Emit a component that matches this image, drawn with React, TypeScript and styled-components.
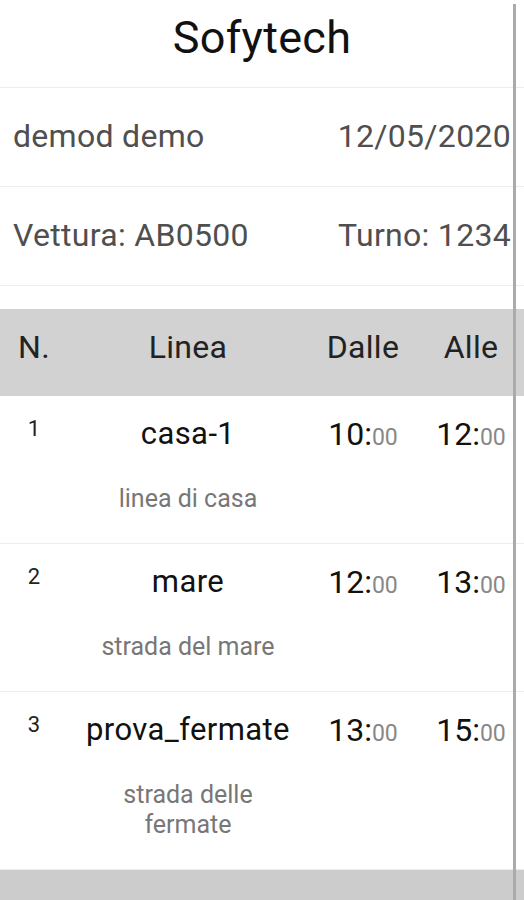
import styled, { createGlobalStyle } from "styled-components";

const GlobalStyle = createGlobalStyle`
  body {
    margin: 0;
    background: #fff;
    font-family: Roboto, "Noto Sans", Arial, sans-serif;
  }
`;

type Corsa = {
  n: number;
  linea: string;
  descrizione: string;
  dalle: [string, string];
  alle: [string, string];
};

const corse: Corsa[] = [
  { n: 1, linea: "casa-1", descrizione: "linea di casa", dalle: ["10", "00"], alle: ["12", "00"] },
  { n: 2, linea: "mare", descrizione: "strada del mare", dalle: ["12", "00"], alle: ["13", "00"] },
  { n: 3, linea: "prova_fermate", descrizione: "strada delle fermate", dalle: ["13", "00"], alle: ["15", "00"] },
];

const Orario = ({ value }: { value: [string, string] }) => (
  <Time>
    {value[0]}:<Minutes>{value[1]}</Minutes>
  </Time>
);

export default function App() {
  return (
    <Screen>
      <GlobalStyle />
      <Title>Sofytech</Title>
      <InfoRow>
        <span>demod demo</span>
        <span>12/05/2020</span>
      </InfoRow>
      <InfoRow>
        <span>Vettura: AB0500</span>
        <span>Turno: 1234</span>
      </InfoRow>

      <Table>
        <HeaderRow>
          <HeadCell>N.</HeadCell>
          <HeadCell>Linea</HeadCell>
          <HeadCell>Dalle</HeadCell>
          <HeadCell>Alle</HeadCell>
        </HeaderRow>
        {corse.map((c) => (
          <Row key={c.n}>
            <Num>{c.n}</Num>
            <LineaCell>
              <LineName>{c.linea}</LineName>
              <LineDesc>{c.descrizione}</LineDesc>
            </LineaCell>
            <TimeCell>
              <Orario value={c.dalle} />
            </TimeCell>
            <TimeCell>
              <Orario value={c.alle} />
            </TimeCell>
          </Row>
        ))}
        <Footer />
      </Table>
      <ScrollThumb />
    </Screen>
  );
}

const Screen = styled.div`
  position: relative;
  width: 524px;
  height: 900px;
  overflow: hidden;
  background: #fff;
`;

const Title = styled.h1`
  margin: 0;
  height: 88px;
  padding-bottom: 12px;
  display: flex;
  align-items: center;
  justify-content: center;
  font-size: 45px;
  font-weight: 400;
  letter-spacing: 0.3px;
  color: #111;
  border-bottom: 1px solid #ececec;
  box-sizing: border-box;
`;

const InfoRow = styled.div`
  height: 99px;
  display: flex;
  align-items: center;
  justify-content: space-between;
  padding: 0 13px 2px 13px;
  box-sizing: border-box;
  border-bottom: 1px solid #ececec;
  font-size: 32px;
  letter-spacing: 0.3px;
  color: #4f4f4f;
`;

const Table = styled.div`
  margin-top: 23px;
`;

const columns = `68px 240px 110px 106px`;

const HeaderRow = styled.div`
  display: grid;
  grid-template-columns: ${columns};
  height: 87px;
  padding-bottom: 12px;
  box-sizing: border-box;
  align-items: center;
  background: #d2d2d2;
`;

const HeadCell = styled.div`
  text-align: center;
  font-size: 32px;
  letter-spacing: 0.3px;
  color: #222;
`;

const Row = styled.div`
  display: grid;
  grid-template-columns: ${columns};
  align-items: start;
  padding: 18px 0 29px;
  border-bottom: 1px solid #ececec;
`;

const Num = styled.div`
  text-align: center;
  font-size: 22px;
  line-height: 30px;
  color: #222;
`;

const LineaCell = styled.div`
  display: flex;
  flex-direction: column;
  align-items: center;
  text-align: center;
`;

const LineName = styled.div`
  font-size: 31px;
  line-height: 40px;
  letter-spacing: 0.4px;
  color: #111;
  white-space: nowrap;
`;

const LineDesc = styled.div`
  margin-top: 30px;
  padding: 0 20px;
  font-size: 25px;
  line-height: 30px;
  color: #777;
`;

const TimeCell = styled.div`
  text-align: center;
  line-height: 40px;
`;

const Time = styled.span`
  font-size: 32px;
  color: #111;
`;

const Minutes = styled.span`
  font-size: 23px;
  color: #888;
`;

const Footer = styled.div`
  height: 60px;
  background: #cccccc;
`;

const ScrollThumb = styled.div`
  position: absolute;
  top: 4px;
  bottom: 0;
  left: 513px;
  width: 3px;
  background: #ababab;
`;
